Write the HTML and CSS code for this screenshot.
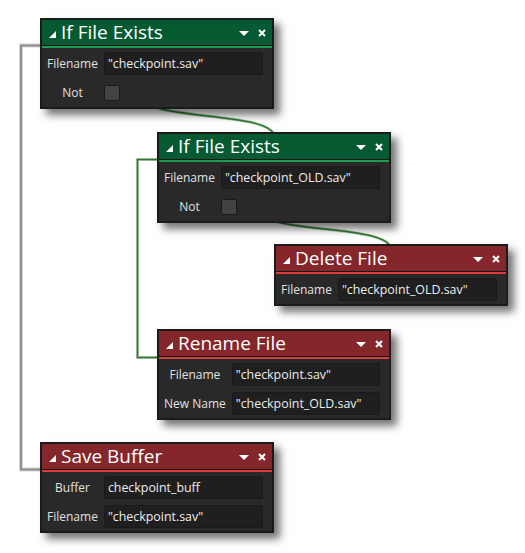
FILE: index.html
```html
<!DOCTYPE html>
<html>
<head>
<meta charset="utf-8">
<link rel="stylesheet" href="styles.css">
</head>
<body>
<div class="canvas">
  <svg class="wires" width="525" height="553" viewBox="0 0 525 553">
    <path class="halo-gray" d="M42 45.5 H21 V469.5 H42"/>
    <path class="core-gray" d="M42 45.5 H21 V469.5 H42"/>
    <path class="halo-green" d="M159 159.5 H137.5 V357.5 H159"/>
    <path class="core-green" d="M159 159.5 H137.5 V357.5 H159"/>
    <path class="halo-green" d="M158 108 C190 118 265 116 274 134"/>
    <path class="core-green" d="M158 108 C190 118 265 116 274 134"/>
    <path class="halo-green" d="M274 221 C306 231 381 229 390 246"/>
    <path class="core-green" d="M274 221 C306 231 381 229 390 246"/>
  </svg>

  <div class="node green n1">
    <div class="head"><span class="tri"></span><span class="title">If File Exists</span><span class="drop"></span><svg class="close" width="8" height="8" viewBox="0 0 8 8"><path d="M1 1 L7 7 M7 1 L1 7"/></svg></div>
    <div class="body">
      <span class="lbl">Filename</span><div class="field">"checkpoint.sav"</div>
      <span class="lbl">Not</span><div class="cell"><div class="check"></div></div>
    </div>
  </div>

  <div class="node green n2">
    <div class="head"><span class="tri"></span><span class="title">If File Exists</span><span class="drop"></span><svg class="close" width="8" height="8" viewBox="0 0 8 8"><path d="M1 1 L7 7 M7 1 L1 7"/></svg></div>
    <div class="body">
      <span class="lbl">Filename</span><div class="field">"checkpoint_OLD.sav"</div>
      <span class="lbl">Not</span><div class="cell"><div class="check"></div></div>
    </div>
  </div>

  <div class="node red n3">
    <div class="head"><span class="tri"></span><span class="title">Delete File</span><span class="drop"></span><svg class="close" width="8" height="8" viewBox="0 0 8 8"><path d="M1 1 L7 7 M7 1 L1 7"/></svg></div>
    <div class="body">
      <span class="lbl">Filename</span><div class="field">"checkpoint_OLD.sav"</div>
    </div>
  </div>

  <div class="node red n4">
    <div class="head"><span class="tri"></span><span class="title">Rename File</span><span class="drop"></span><svg class="close" width="8" height="8" viewBox="0 0 8 8"><path d="M1 1 L7 7 M7 1 L1 7"/></svg></div>
    <div class="body">
      <span class="lbl">Filename</span><div class="field">"checkpoint.sav"</div>
      <span class="lbl">New Name</span><div class="field">"checkpoint_OLD.sav"</div>
    </div>
  </div>

  <div class="node red n5">
    <div class="head"><span class="tri"></span><span class="title">Save Buffer</span><span class="drop"></span><svg class="close" width="8" height="8" viewBox="0 0 8 8"><path d="M1 1 L7 7 M7 1 L1 7"/></svg></div>
    <div class="body">
      <span class="lbl">Buffer</span><div class="field">checkpoint_buff</div>
      <span class="lbl">Filename</span><div class="field">"checkpoint.sav"</div>
    </div>
  </div>
</div>
</body>
</html>
```

FILE: styles.css
```css
* { box-sizing: border-box; margin: 0; padding: 0; }
html, body { background: #ffffff; }
body { font-family: "Open Sans", "Noto Sans", sans-serif; }

.canvas { position: relative; width: 525px; height: 553px; overflow: hidden; }
.wires { position: absolute; left: 0; top: 0; }
.wires path { fill: none; }
.halo-gray { stroke: #d4d4d4; stroke-width: 3.8; }
.core-gray { stroke: #8e8e8e; stroke-width: 2; }
.halo-green { stroke: #b9cdb9; stroke-width: 3; }
.core-green { stroke: #2b7a2b; stroke-width: 1.5; }

.node {
  position: absolute;
  width: 234px;
  background: #292929;
  border: 2px solid #1b1b1b;
  box-shadow: 6px 6px 8px rgba(0, 0, 0, 0.55);
}
.n1 { left: 40px; top: 18px; }
.n2 { left: 157px; top: 132px; }
.n3 { left: 274px; top: 244px; }
.n4 { left: 157px; top: 329px; }
.n5 { left: 40px; top: 442px; }

.head {
  height: 26px;
  display: flex;
  align-items: center;
  padding: 0 6px 0 7px;
  border-bottom: 1px solid #161616;
  color: #ffffff;
}
.green .head { background: #055a32; }
.red .head { background: #84262a; }
.green .body { border-top: 2px solid #1f9a55; }
.red .body { border-top: 2px solid #de3b3b; }

.tri {
  width: 0; height: 0;
  border-left: 7px solid transparent;
  border-bottom: 7px solid #ffffff;
  margin-top: 4px;
}
.title {
  flex: 1;
  font-size: 19px;
  line-height: 1;
  margin-left: 5px;
  white-space: nowrap;
}
.drop {
  width: 0; height: 0;
  border-left: 5px solid transparent;
  border-right: 5px solid transparent;
  border-top: 5px solid #ffffff;
  margin-right: 9px;
  margin-top: 1px;
}
.close path { stroke: #ffffff; stroke-width: 2; fill: none; }

.body {
  display: grid;
  grid-template-columns: auto 1fr;
  grid-auto-rows: 23px;
  column-gap: 6px;
  row-gap: 6px;
  padding: 4px 9px 3px 5px;
  align-items: center;
}
.lbl {
  font-size: 12px;
  color: #e0e0e0;
  text-align: center;
  white-space: nowrap;
}
.field {
  height: 23px;
  background: #1f1f1f;
  border: 1px solid #1a1a1a;
  border-radius: 2px;
  color: #ededed;
  font-size: 12.4px;
  padding-left: 3px;
  display: flex;
  align-items: center;
  white-space: nowrap;
}
.cell { display: flex; align-items: center; }
.check {
  width: 16px; height: 16px;
  background: #434343;
  border: 1px solid #1a1a1a;
  border-radius: 2px;
}
```
